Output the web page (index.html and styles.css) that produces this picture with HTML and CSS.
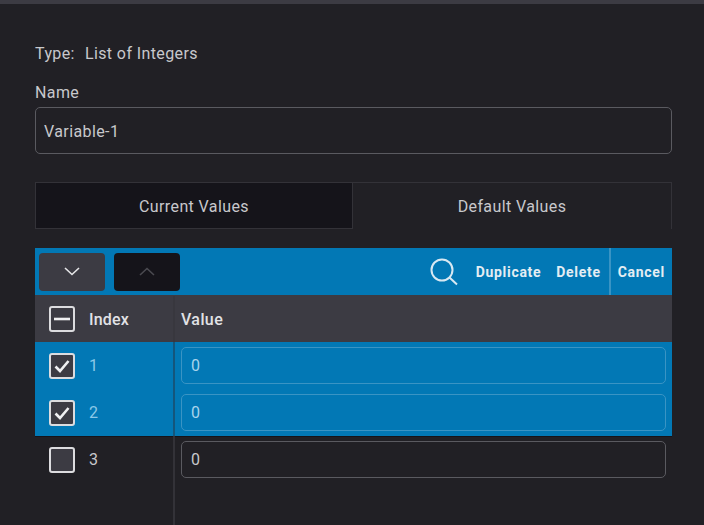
FILE: index.html
```html
<!DOCTYPE html>
<html lang="en">
<head>
  <meta charset="UTF-8" />
  <title>Variable</title>
  <link rel="stylesheet" href="styles.css">
</head>
<body>
  <div class="top-strip"></div>

  <main class="editor">
    <p class="type-line"><span>Type:</span><span>List of Integers</span></p>

    <label class="name-label" for="nameInput">Name</label>
    <input class="text-field" id="nameInput" type="text" value="Variable-1" />

    <div class="tabs">
      <div class="tab active">Current Values</div>
      <div class="tab">Default Values</div>
    </div>

    <div class="toolbar">
      <button class="move-btn">
        <svg width="16" height="9" viewBox="0 0 16 9"><path d="M1 1l7 6.5L15 1" /></svg>
      </button>
      <button class="move-btn disabled">
        <svg width="16" height="9" viewBox="0 0 16 9"><path d="M1 8l7-6.5L15 8" /></svg>
      </button>
      <div class="toolbar-actions">
        <svg class="search-icon" width="28" height="28" viewBox="0 0 28 28"><circle cx="12" cy="12" r="10.5" /><path d="M19.5 19.5l7.5 7" /></svg>
        <a class="action">Duplicate</a>
        <a class="action">Delete</a>
        <a class="action cancel">Cancel</a>
      </div>
    </div>

    <div class="table">
      <div class="row head">
        <div class="index-cell">
          <span class="check"><svg width="16" height="14" viewBox="0 0 16 14"><path d="M0 7h16" /></svg></span>
          <span>Index</span>
        </div>
        <div class="value-cell">Value</div>
      </div>

      <div class="row selected">
        <div class="index-cell">
          <span class="check"><svg width="16" height="14" viewBox="0 0 16 14"><path d="M1.5 7.5l4.5 4.5L14.5 2" /></svg></span>
          <span>1</span>
        </div>
        <div class="value-cell"><input class="text-field" type="text" value="0" /></div>
      </div>

      <div class="row selected">
        <div class="index-cell">
          <span class="check"><svg width="16" height="14" viewBox="0 0 16 14"><path d="M1.5 7.5l4.5 4.5L14.5 2" /></svg></span>
          <span>2</span>
        </div>
        <div class="value-cell"><input class="text-field" type="text" value="0" /></div>
      </div>

      <div class="row">
        <div class="index-cell">
          <span class="check"></span>
          <span>3</span>
        </div>
        <div class="value-cell"><input class="text-field" type="text" value="0" /></div>
      </div>

      <div class="row filler">
        <div class="index-cell"></div>
        <div class="value-cell"></div>
      </div>
    </div>
  </main>
</body>
</html>
```

FILE: styles.css
```css
html, body {
  height: 100%;
}
body {
  margin: 0;
  overflow: hidden;
  background: #212025;
  color: #c8c8cc;
  font-family: Roboto, "Liberation Sans", sans-serif;
  font-size: 16px;
  letter-spacing: 0.4px;
}
.top-strip {
  height: 4px;
  background: #3c3b43;
}
.editor {
  display: flex;
  flex-direction: column;
  padding: 0 32px 0 35px;
}
.type-line {
  display: flex;
  gap: 10px;
  margin: 40px 0 0;
  height: 19px;
  line-height: 19px;
}
.name-label {
  margin-top: 20px;
  height: 19px;
  line-height: 19px;
}
.text-field {
  box-sizing: border-box;
  width: 100%;
  height: 47px;
  padding: 1px 8px 0;
  background: transparent;
  border: 1.5px solid #5a5a60;
  border-radius: 5px;
  color: #c8c8cc;
  font: inherit;
  letter-spacing: inherit;
  outline: none;
}
.name-label + .text-field {
  margin-top: 5px;
}
.tabs {
  display: flex;
  height: 47px;
  margin-top: 28px;
}
.tab {
  flex: 1;
  display: flex;
  align-items: center;
  justify-content: center;
  box-sizing: border-box;
  padding-top: 1px;
  border-top: 1px solid #333238;
  border-right: 1px solid #333238;
}
.tab.active {
  flex: 0 0 318px;
  background: #15141a;
  border-left: 1px solid #333238;
  border-bottom: 1px solid #333238;
}
.toolbar {
  display: flex;
  align-items: center;
  gap: 9px;
  height: 47px;
  margin-top: 19px;
  padding-left: 4px;
  background: #0278b5;
}
.move-btn {
  display: flex;
  align-items: center;
  justify-content: center;
  width: 66px;
  height: 38px;
  padding: 0;
  background: #3c3b43;
  border: 0;
  border-radius: 4px;
}
.move-btn svg path {
  fill: none;
  stroke: #e6e6e8;
  stroke-width: 1.6;
}
.move-btn.disabled {
  background: #15141a;
}
.move-btn.disabled svg path {
  stroke: #4a4a50;
}
.toolbar-actions {
  display: flex;
  align-items: center;
  align-self: stretch;
  margin-left: auto;
  color: #e4edf3;
  font-size: 14px;
  font-weight: 700;
  letter-spacing: 0.7px;
}
.search-icon {
  margin-right: 18px;
}
.search-icon circle, .search-icon path {
  fill: none;
  stroke: #d8e8f2;
  stroke-width: 2;
}
.action {
  margin-right: 15px;
}
.action.cancel {
  align-self: stretch;
  display: flex;
  align-items: center;
  margin: 0 0 0 -7px;
  padding: 0 7px 0 7px;
  border-left: 2px solid #3a94c4;
}
.row {
  display: flex;
  height: 47px;
}
.index-cell {
  flex: 0 0 138px;
  box-sizing: border-box;
  display: flex;
  align-items: center;
  gap: 14px;
  padding-left: 14px;
}
.value-cell {
  flex: 1;
  display: flex;
  align-items: center;
  padding: 0 6px;
  border-left: 2px solid #333238;
}
.value-cell .text-field {
  height: 37px;
  padding: 0 9px;
}
.head {
  background: #3c3b43;
  color: #e2e2e6;
  font-weight: 500;
  padding-top: 1px;
  box-sizing: border-box;
}
.head .index-cell {
  letter-spacing: 0.2px;
}
.head .check {
  margin-top: -1px;
}
.head .value-cell {
  border-left-color: #38373e;
}
.check {
  box-sizing: border-box;
  display: flex;
  align-items: center;
  justify-content: center;
  width: 26px;
  height: 26px;
  background: #3c3b43;
  border: 2px solid #dcdcdf;
  border-radius: 3px;
}
.check svg path {
  fill: none;
  stroke: #f0f0f2;
  stroke-width: 2.6;
}
.selected {
  background: #0278b5;
  color: #8cc8e8;
}
.selected .value-cell {
  border-left-color: #14567c;
}
.selected .text-field {
  border-color: #3a94c4;
  color: #a8d4ec;
}
.selected + .row:not(.selected) {
  box-shadow: inset 0 1px #15141a;
}
.filler {
  height: 60px;
}
```
